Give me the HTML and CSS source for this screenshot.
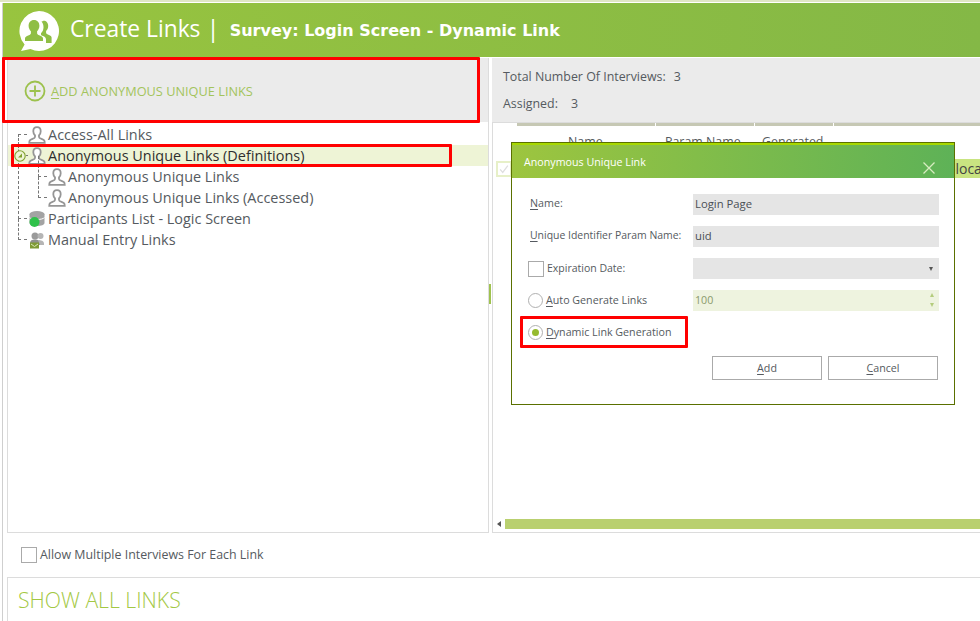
FILE: index.html
```html
<!DOCTYPE html>
<html lang="en">
<head>
<meta charset="utf-8">
<title>Create Links</title>
<link rel="stylesheet" href="styles.css">
</head>
<body>
<svg class="defs" width="0" height="0" aria-hidden="true">
  <symbol id="person" viewBox="0 0 18 18">
    <path d="M9 1.200c-2.400 0-3.700 1.800-3.700 4 0 1.700.8 3.200 1.700 4.200v1.500c0 .8-1 1.300-2.500 1.900-1.600.6-2.800 1.200-3 2.200l-.2 1.800h15.400l-.2-1.800c-.2-1-1.400-1.600-3-2.200-1.500-.6-2.500-1.100-2.500-1.900V9.400c.9-1 1.700-2.500 1.700-4.200 0-2.200-1.300-4-3.700-4z" fill="#fff" stroke="#969696" stroke-width="1.800"/>
  </symbol>
</svg>
<div class="window">
  <header class="banner">
    <svg class="logo" viewBox="0 0 42 42" width="42" height="42">
      <path d="M21 1a20 20 0 1 1-8.500 38.100L3 41l3.600-6.600A20 20 0 0 1 21 1z" fill="#fff"/>
      <path d="M16 10c-3.400 0-5.400 2.600-5.400 5.800 0 2.300 1 4.200 2.300 5.400v2c0 1.200-1.500 1.800-3.300 2.600-1.500.6-2.600 1.500-2.600 2.700v2.500h18v-2.500c0-1.200-1.100-2.100-2.600-2.700-1.800-.8-3.300-1.400-3.300-2.600v-2c1.300-1.200 2.300-3.100 2.300-5.400 0-3.200-2-5.800-5.400-5.800z" fill="#8fbe45"/>
      <path d="M25.500 10.500c2.900.2 4.700 2.600 4.700 5.400 0 2.100-.9 3.900-2.100 5v1.800c0 1.100 1.300 1.700 2.900 2.300 1.400.6 2.600 1.400 2.600 2.600v5.400h-5.600v-3.500c0-1.700-1.300-2.800-3-3.500-1.100-.5-2-.9-2-1.600v-1.200c1.500-1.400 2.500-3.500 2.500-6 0-2.400-.7-4.400-2-5.800.6-.3 1.300-.5 2-.5z" fill="#8fbe45"/>
    </svg>
    <h1 class="banner-title">Create Links</h1>
    <span class="banner-sep">|</span>
    <span class="banner-survey">Survey: Login Screen - Dynamic Link</span>
  </header>

  <div class="panes">
    <section class="left-pane">
      <div class="add-bar">
        <svg class="add-icon" viewBox="0 0 22 22" width="22" height="22">
          <circle cx="11" cy="11" r="9.500" fill="none" stroke="#9cc14c" stroke-width="1.800"/>
          <path d="M11 5.500v11M5.500 11h11" stroke="#9cc14c" stroke-width="1.800"/>
        </svg>
        <span class="add-label"><u>A</u>DD ANONYMOUS UNIQUE LINKS</span>
      </div>
      <ul class="tree">
        <li class="node">
          <span class="link link-first"></span>
          <svg class="node-icon"><use href="#person"/></svg>
          <span>Access-All Links</span>
        </li>
        <li class="node node-selected">
          <span class="link link-through"></span>
          <svg class="expander" viewBox="0 0 12 12" width="12" height="12">
            <circle cx="6" cy="6" r="5.200" fill="#eef4d6" stroke="#7fa02c" stroke-width="1.100"/>
            <path d="M8 3.500v4H4z" fill="#7fa02c"/>
          </svg>
          <span class="link-stub"></span>
          <svg class="node-icon"><use href="#person"/></svg>
          <span>Anonymous Unique Links (Definitions)</span>
        </li>
        <li class="node node-child">
          <span class="link link-child"></span>
          <svg class="node-icon"><use href="#person"/></svg>
          <span>Anonymous Unique Links</span>
        </li>
        <li class="node node-child">
          <span class="link link-child"></span>
          <svg class="node-icon"><use href="#person"/></svg>
          <span>Anonymous Unique Links (Accessed)</span>
        </li>
        <li class="node">
          <span class="link link-long"></span>
          <svg class="node-icon" viewBox="0 0 18 18">
            <ellipse cx="9" cy="4" rx="7.500" ry="3" fill="#a3a3a3"/>
            <path d="M1.500 4v9c0 1.700 3.400 3 7.500 3s7.500-1.300 7.500-3V4z" fill="#a3a3a3"/>
            <path d="M1.500 7.500c1 1.300 4 2 7.500 2s6.500-.7 7.500-2" fill="none" stroke="#fff"/>
            <circle cx="6.500" cy="12" r="5" fill="#2fc14a"/>
          </svg>
          <span>Participants List - Logic Screen</span>
        </li>
        <li class="node">
          <span class="link link-last"></span>
          <svg class="node-icon" viewBox="0 0 18 18">
            <circle cx="7" cy="5" r="3.500" fill="#9a9a9a"/>
            <circle cx="12.500" cy="5" r="3" fill="#b5b5b5"/>
            <path d="M2 12c0-2.500 2-3.500 5-3.500s5 1 5 3.500v2H2z" fill="#8f8f8f"/>
            <path d="M10 9c3 0 6 1 6 3.500V14h-4z" fill="#b5b5b5"/>
            <rect x="2" y="11.500" width="9" height="6" fill="#7f9a35"/>
            <path d="M3 13l3.500 2.500L10 13" fill="none" stroke="#dbe7b8"/>
          </svg>
          <span>Manual Entry Links</span>
        </li>
      </ul>
    </section>

    <div class="splitter"><span class="grip"></span></div>

    <section class="right-pane">
      <div class="summary">
        <div class="summary-line"><span>Total Number Of Interviews:</span><span>3</span></div>
        <div class="summary-line summary-assigned"><span>Assigned:</span><span>3</span></div>
      </div>
      <div class="grid">
        <div class="grid-rule">
          <span class="rule-blank"></span>
          <span class="rule-cell rule-name"></span>
          <span class="rule-cell rule-param"></span>
          <span class="rule-cell rule-generated"></span>
          <span class="rule-rest"></span>
        </div>
        <div class="grid-head">
          <span class="col-name">Name</span>
          <span class="col-param">Param Name</span>
          <span class="col-generated">Generated</span>
        </div>
        <div class="grid-row">
          <span class="row-check">
            <svg viewBox="0 0 14 14" width="14" height="14"><path d="M2.500 7.500l3 3.500 6-8" fill="none" stroke="#dedede" stroke-width="1.500"/></svg>
          </span>
          <span class="row-cell">Geoloca</span>
        </div>
        <div class="grid-fill"></div>
        <div class="hscroll">
          <span class="hscroll-arrow"></span>
          <span class="hscroll-thumb"></span>
        </div>
      </div>
    </section>
  </div>

  <label class="allow">
    <span class="box"></span>
    <span class="allow-text">Allow Multiple Interviews For Each Link</span>
  </label>

  <div class="show-all">SHOW ALL LINKS</div>

  <div class="dialog">
    <div class="dialog-head">
      <span>Anonymous Unique Link</span>
      <svg class="dialog-close" viewBox="0 0 12 12" width="12" height="12"><path d="M.5.500l11 11M11.500.500l-11 11" stroke="#d7ecc0" stroke-width="1.300"/></svg>
    </div>
    <div class="dialog-body">
      <div class="form-row">
        <span class="form-label"><u>N</u>ame:</span>
        <span class="field">Login Page</span>
      </div>
      <div class="form-row">
        <span class="form-label form-label-long"><u>U</u>nique Identifier Param Name:</span>
        <span class="field">uid</span>
      </div>
      <div class="form-row">
        <span class="form-label form-check"><span class="box box-small"></span><span class="nudge">Expiration Date:</span></span>
        <span class="field field-select"><span class="caret"></span></span>
      </div>
      <div class="form-row">
        <span class="form-label form-radio"><span class="radio"></span><span class="nudge"><u>A</u>uto Generate Links</span></span>
        <span class="field field-spin">100<span class="spin"><span class="spin-up"></span><span class="spin-down"></span></span></span>
      </div>
      <div class="form-row">
        <span class="form-label form-radio"><span class="radio radio-on"></span><span class="nudge"><u>D</u>ynamic Link Generation</span></span>
      </div>
      <div class="dialog-actions">
        <span class="btn"><span><u>A</u>dd</span></span>
        <span class="btn"><span><u>C</u>ancel</span></span>
      </div>
    </div>
  </div>

  <div class="mark mark-add"></div>
  <div class="mark mark-tree"></div>
  <div class="mark mark-radio"></div>
</div>
</body>
</html>
```

FILE: styles.css
```css
* { box-sizing: border-box; }
html, body { margin: 0; height: 100%; }
body {
  background: #fff;
  color: #555a60;
  font-family: "Open Sans", "Noto Sans", sans-serif;
  overflow: hidden;
}
.defs { position: absolute; }
u { text-underline-offset: 2px; }

.window {
  position: relative;
  width: 980px;
  height: 621px;
  padding-top: 3px;
  padding-left: 3px;
  overflow: hidden;
  background: linear-gradient(#dfe6c4 0 2px, #fff 2px);
}
.window::before {
  content: "";
  position: absolute;
  left: 2px;
  top: 3px;
  bottom: 0;
  width: 1px;
  background: #cfcfcf;
}

.banner {
  height: 54px;
  display: flex;
  align-items: center;
  padding-left: 15px;
  background: linear-gradient(90deg, #98c43f, #84b846);
  color: #fff;
}
.logo { flex: none; margin-right: 10px; margin-top: 2px; }
.banner-title { margin: -3px 0 0; font-size: 22.800px; font-weight: 400; }
.banner-sep { font-size: 24px; margin: -5px 10px 0 6px; font-weight: 400; }
.banner-survey { font: 700 16px "DejaVu Sans", sans-serif; }

.panes {
  height: 476px;
  display: flex;
  padding-left: 4px;
  padding-top: 1px;
}
.left-pane {
  width: 482px;
  height: 475px;
  display: flex;
  flex-direction: column;
  border: 1px solid #dcdcdc;
  border-top: 0;
}
.add-bar {
  height: 64px;
  flex: none;
  display: flex;
  align-items: center;
  padding: 2px 0 0 16px;
  background: #ebebeb;
}
.add-icon { margin-right: 5px; }
.add-label { font-size: 12.750px; color: #a3c45c; }

.tree {
  list-style: none;
  margin: 2px 0 0;
  padding: 0;
  font-size: 14.450px;
  color: #555a60;
}
.node {
  position: relative;
  height: 21px;
  display: flex;
  align-items: center;
  padding-left: 20px;
  white-space: nowrap;
}
.node-selected {
  padding-left: 6px;
  background: #eef4d6;
  color: #2e2e2e;
}
.node-child { padding-left: 40px; }
.node-icon { width: 18px; height: 18px; flex: none; margin-right: 2px; position: relative; }
.expander { flex: none; position: relative; }
.link-stub { width: 2px; border-top: 1px dashed #777; flex: none; }
.link {
  position: absolute;
  border-left: 1px dashed #777;
  border-bottom: 1px dashed #777;
}
.link-first { left: 10px; top: 10px; width: 9px; height: 11px; border-bottom: 0; border-top: 1px dashed #777; }
.link-through { left: 10px; top: 0; width: 0; height: 21px; border-bottom: 0; }
.link-child { left: 30px; top: -10px; width: 9px; height: 21px; }
.link-long { left: 10px; top: -42px; width: 9px; height: 53px; }
.link-last { left: 10px; top: -10px; width: 9px; height: 21px; }

.splitter {
  width: 3px;
  position: relative;
  flex: none;
}
.grip {
  position: absolute;
  left: 0;
  top: 226px;
  width: 2px;
  height: 20px;
  background: #9fc24f;
}

.right-pane {
  flex: 1;
  height: 475px;
  display: flex;
  flex-direction: column;
  min-width: 0;
}
.summary {
  height: 65px;
  flex: none;
  background: #ebebeb;
  border-bottom: 1px solid #dcdcdc;
  padding: 9px 0 0 11px;
  font-size: 12.400px;
}
.summary-line { display: flex; gap: 8px; height: 18px; align-items: center; }
.summary-assigned { margin-top: 9px; gap: 13px; }

.grid {
  flex: 1;
  display: flex;
  flex-direction: column;
  border-left: 1px solid #dcdcdc;
  border-bottom: 1px solid #dcdcdc;
  min-height: 0;
}
.grid-rule { height: 3px; display: flex; flex: none; }
.rule-blank { width: 24px; }
.rule-cell { background: #c6c8b4; border-right: 1px solid #fff; }
.rule-name { width: 139px; }
.rule-param { width: 99px; }
.rule-generated { width: 79px; }
.rule-rest { flex: 1; background: #c6c8b4; }
.grid-head { height: 33px; position: relative; font-size: 12.400px; flex: none; }
.grid-head span { position: absolute; top: 7px; }
.col-name { left: 75px; }
.col-param { left: 172px; }
.col-generated { left: 269px; }
.grid-row { height: 19px; display: flex; align-items: center; flex: none; }
.row-check {
  width: 16px;
  height: 16px;
  margin-left: 3px;
  border: 2px solid #e7f0c8;
  display: flex;
  align-items: center;
  justify-content: center;
}
.row-cell {
  margin-left: auto;
  width: 51px;
  height: 19px;
  background: #c9e481;
  font-size: 14px;
  color: #444;
  line-height: 19px;
  overflow: hidden;
}
.grid-fill { flex: 1; }
.hscroll { height: 10px; display: flex; align-items: center; margin-bottom: 3px; flex: none; }
.hscroll-arrow {
  margin-left: 4px;
  border: 3.500px solid transparent;
  border-right: 4px solid #555;
  border-left: 0;
}
.hscroll-thumb { flex: 1; height: 10px; margin-left: 4px; background: #b9d06f; }

.allow {
  height: 44px;
  display: flex;
  align-items: center;
  gap: 3px;
  padding-left: 18px;
  font-size: 12.400px;
}
.allow-text { padding-bottom: 2px; }
.box {
  width: 16px;
  height: 16px;
  flex: none;
  border: 1px solid #aaa;
  background: #fff;
}
.show-all {
  margin-left: 4px;
  height: 44px;
  border-top: 1px solid #dcdcdc;
  border-left: 1px solid #dcdcdc;
  padding: 8px 0 0 10px;
  font-size: 21.200px;
  line-height: 28px;
  color: #a3c843;
  font-weight: 300;
}

.dialog {
  position: absolute;
  left: 511px;
  top: 142px;
  width: 444px;
  height: 263px;
  background: #fff;
  border: 1px solid #5a7000;
  font-size: 10.700px;
}
.dialog-head {
  height: 35px;
  border-top: 2px solid #a7d800;
  background: linear-gradient(90deg, #9dc53f, #5eb257);
  color: #fff;
  display: flex;
  align-items: center;
  padding: 0 0 0 12px;
  position: relative;
}
.dialog-close { position: absolute; left: 411px; top: 17px; }
.dialog-body { padding: 16px 15px 0 18px; }
.form-row { display: flex; align-items: center; height: 21px; margin-bottom: 11px; }
.form-label { width: 163px; flex: none; white-space: nowrap; padding-bottom: 4px; }
.form-label-long { font-size: 10.450px; }
.form-check { display: flex; align-items: center; gap: 3px; margin-left: -2px; width: 165px; font-size: 10.500px; padding-bottom: 0; }
.box-small { width: 16px; height: 16px; }
.form-radio { display: flex; align-items: center; gap: 3px; margin-left: -2px; width: 165px; padding-bottom: 0; }
.nudge { padding-bottom: 2px; }
.radio {
  width: 15px;
  height: 15px;
  flex: none;
  border-radius: 50%;
  border: 1px solid #b0b0b0;
  background: #fff;
  display: flex;
  align-items: center;
  justify-content: center;
}
.radio-on::after {
  content: "";
  width: 7px;
  height: 7px;
  border-radius: 50%;
  background: #96bb2f;
}
.field {
  width: 246px;
  height: 21px;
  padding-left: 2px;
  background: #e5e5e5;
  color: #4a4f55;
  font-size: 11.300px;
  line-height: 20px;
  position: relative;
  display: block;
}
.field-select { padding: 0; }
.caret {
  position: absolute;
  right: 6px;
  top: 9px;
  border: 2.500px solid transparent;
  border-top: 4px solid #555;
  border-bottom: 0;
}
.field-spin { background: #eef3df; color: #8a9a6a; font-size: 10.700px; }
.spin { position: absolute; right: 5px; top: 3px; display: flex; flex-direction: column; gap: 6px; }
.spin-up { border: 2.500px solid transparent; border-bottom: 4px solid #b4cc7c; border-top: 0; }
.spin-down { border: 2.500px solid transparent; border-top: 4px solid #b4cc7c; border-bottom: 0; }
.dialog-actions {
  display: flex;
  gap: 6px;
  justify-content: flex-end;
  padding-right: 1px;
  margin-top: 13px;
}
.btn {
  width: 110px;
  height: 24px;
  border: 1px solid #aaa;
  display: flex;
  align-items: center;
  justify-content: center;
}

.mark {
  position: absolute;
  border: 3px solid #f00;
  border-radius: 1px;
  pointer-events: none;
}
.mark-add { left: 2px; top: 57px; width: 478px; height: 66px; }
.mark-tree { left: 11px; top: 144px; width: 441px; height: 23px; }
.mark-radio { left: 520px; top: 316px; width: 168px; height: 32px; }
```
